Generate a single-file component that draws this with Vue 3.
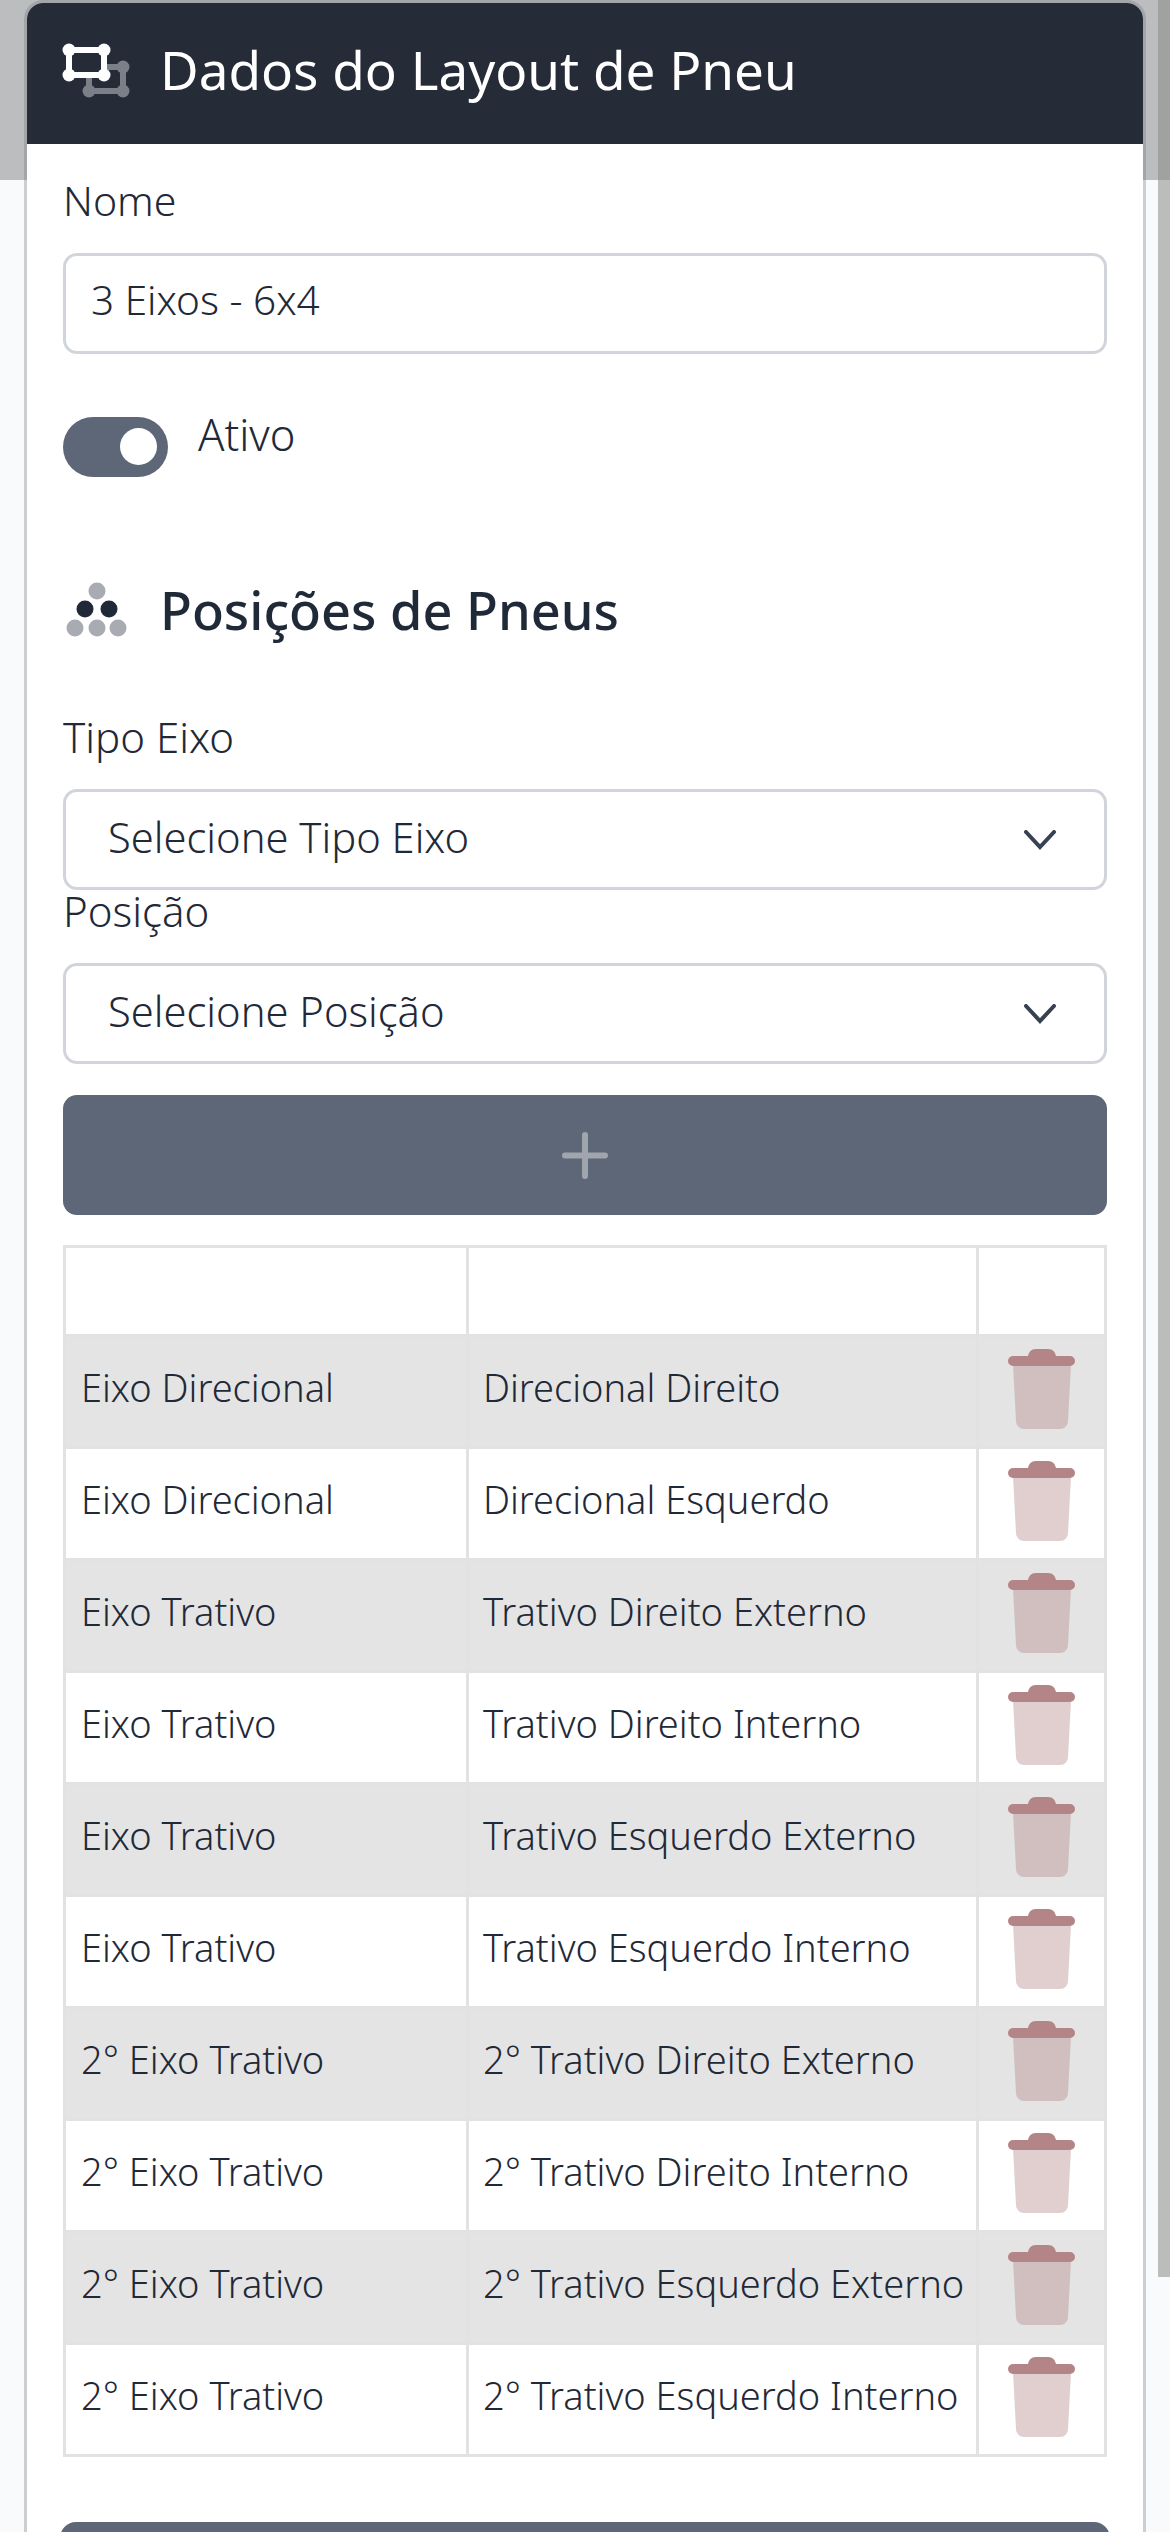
<script setup>
const rows = [
  ['Eixo Direcional', 'Direcional Direito'],
  ['Eixo Direcional', 'Direcional Esquerdo'],
  ['Eixo Trativo', 'Trativo Direito Externo'],
  ['Eixo Trativo', 'Trativo Direito Interno'],
  ['Eixo Trativo', 'Trativo Esquerdo Externo'],
  ['Eixo Trativo', 'Trativo Esquerdo Interno'],
  ['2° Eixo Trativo', '2° Trativo Direito Externo'],
  ['2° Eixo Trativo', '2° Trativo Direito Interno'],
  ['2° Eixo Trativo', '2° Trativo Esquerdo Externo'],
  ['2° Eixo Trativo', '2° Trativo Esquerdo Interno'],
]
</script>

<template>
  <div class="page">
    <div class="backdrop"></div>
    <div class="rail"></div>
    <main class="card">
      <header class="head">
        <svg class="head-icon" viewBox="0 0 70 56" width="70" height="56">
          <path d="M27 32V48H61V24H42" fill="none" stroke="#7b7f87" stroke-width="6" />
          <g fill="#7b7f87">
            <circle cx="27" cy="48" r="6.5" /><circle cx="61" cy="48" r="6.5" /><circle cx="61" cy="24" r="6.5" />
          </g>
          <rect x="7" y="7" width="35" height="25" fill="none" stroke="#fff" stroke-width="6" />
          <g fill="#fff">
            <circle cx="7" cy="7" r="6.5" /><circle cx="42" cy="7" r="6.5" /><circle cx="7" cy="32" r="6.5" /><circle cx="42" cy="32" r="6.5" />
          </g>
        </svg>
        <h1>Dados do Layout de Pneu</h1>
      </header>
      <div class="body">
        <label class="label name">Nome</label>
        <div class="input">3 Eixos - 6x4</div>
        <div class="toggle-row">
          <span class="toggle"><i></i></span>
          <span class="toggle-label">Ativo</span>
        </div>
        <div class="section">
          <svg viewBox="0 0 62 56" width="62" height="56">
            <g fill="#a9abb2">
              <circle cx="31" cy="9" r="8.5" /><circle cx="9" cy="46" r="8.5" /><circle cx="31" cy="46" r="8.5" /><circle cx="52" cy="46" r="8.5" />
            </g>
            <g fill="#1f2937">
              <circle cx="19" cy="27" r="8.5" /><circle cx="43" cy="27" r="8.5" />
            </g>
          </svg>
          <h2>Posições de Pneus</h2>
        </div>
        <label class="label l2">Tipo Eixo</label>
        <div class="select"><span>Selecione Tipo Eixo</span><svg viewBox="0 0 32 20" width="32" height="20"><path d="M2 2l14 15L30 2" fill="none" stroke="#374151" stroke-width="4" stroke-linecap="round" /></svg></div>
        <label class="label l3">Posição</label>
        <div class="select"><span>Selecione Posição</span><svg viewBox="0 0 32 20" width="32" height="20"><path d="M2 2l14 15L30 2" fill="none" stroke="#374151" stroke-width="4" stroke-linecap="round" /></svg></div>
        <button class="add" type="button">
          <svg viewBox="0 0 46 47" width="46" height="47"><path d="M23 3v41M3 23.500h40" stroke="#a0a5ae" stroke-width="6" stroke-linecap="round" /></svg>
        </button>
        <table class="table">
          <thead><tr><th class="c1"></th><th class="c2"></th><th class="c3"></th></tr></thead>
          <tbody>
            <tr v-for="(r, i) in rows" :key="i" :class="{ odd: i % 2 === 0 }">
              <td>{{ r[0] }}</td>
              <td>{{ r[1] }}</td>
              <td class="act">
                <svg viewBox="0 0 67 80" width="67" height="80">
                  <path d="M5 15h58l-3 57a8 8 0 0 1-8 8H16a8 8 0 0 1-8-8z" fill="#b38586" fill-opacity=".4" />
                  <path d="M20 7c1-4 3-7 8-7h12c5 0 7 3 8 7h14a5 5 0 0 1 0 10H5a5 5 0 0 1 0-10z" fill="#b38586" />
                </svg>
              </td>
            </tr>
          </tbody>
        </table>
        <div class="save"></div>
      </div>
    </main>
  </div>
</template>

<style>
html, body { margin: 0; height: 2532px; overflow: hidden; background: #f9fafc; }
</style>

<style scoped>
.page { position: relative; height: 2532px; overflow: hidden; background: #f9fafc; font-family: "Noto Sans", sans-serif; color: #1f2937; }
.backdrop { position: absolute; left: 0; right: 0; top: 0; height: 180px; background: #bbbdbf; }
.rail { position: absolute; right: 0; top: 0; width: 12px; height: 2277px; background: linear-gradient(#a0a2a0 180px, #bbbdbb 180px); }
.card { position: relative; width: 1116px; margin: 3px 0 0 27px; background: #fff; border-radius: 16px 16px 0 0; box-shadow: 0 0 0 3px rgba(120,122,125,.35); height: 2600px; }
.head { height: 141px; background: #252b37; border-radius: 16px 16px 0 0; display: flex; align-items: center; padding: 0 0 6px 35px; box-sizing: border-box; color: #fff; }
.head-icon { margin-right: 28px; flex: none; }
h1 { margin: 0; font-size: 53px; font-weight: 400; line-height: 58px; padding-bottom: 2px; }
.body { padding: 33px 36px 0 36px; }
.label { display: block; font-size: 42px; font-weight: 300; line-height: 48px; padding-bottom: 2px; }
.name { font-size: 41px; line-height: 46px; padding-bottom: 4px; }
.input { margin-top: 26px; height: 101px; box-sizing: border-box; border: 3px solid #d1d5db; border-radius: 14px; padding-left: 25px; font-size: 40.500px; font-weight: 300; line-height: 88px; }
.toggle-row { display: flex; margin-top: 63px; }
.toggle { width: 105px; height: 60px; background: #5e6777; border-radius: 30px; position: relative; display: block; }
.toggle i { position: absolute; right: 11px; top: 11px; width: 37px; height: 37px; background: #fff; border-radius: 50%; }
.toggle-label { margin-left: 30px; font-size: 43.500px; font-weight: 300; line-height: 50px; margin-top: -8px; }
.section { display: flex; align-items: center; margin-top: 103px; height: 60px; }
.section svg { margin: 0 32px 0 3px; flex: none; }
h2 { margin: 0; font-size: 52.300px; font-weight: 500; line-height: 60px; }
.l2 { margin-top: 73px; }
.l3 { margin-top: -3px; }
.select { margin-top: 26px; height: 101px; box-sizing: border-box; border: 3px solid #d1d5db; border-radius: 14px; padding: 0 48px 0 42px; font-size: 41.700px; font-weight: 300; display: flex; align-items: center; justify-content: space-between; }
.select span { padding-bottom: 6px; }
.add { display: flex; width: 100%; height: 120px; margin-top: 31px; align-items: center; justify-content: center; border: 0; padding: 0; background: #5e6777; border-radius: 14px; }
.table { width: 1044px; margin-top: 30px; border-collapse: collapse; table-layout: fixed; font-size: 38px; font-weight: 300; }
th { height: 86px; border: 3px solid #e2e2e2; padding: 0; }
.c1 { width: 400px; }
.c3 { width: 125px; }
td { padding: 0 0 10px 15px; box-sizing: content-box; border: 3px solid #e2e2e2; white-space: nowrap; line-height: 50px; }
tbody td { height: 99px; }
tbody td:nth-child(2) { padding-left: 14px; }
tr.odd td { background: #e4e4e4; }
tbody td.act { padding: 0; height: 109px; vertical-align: top; }
.act svg { display: block; margin: 12px auto 0; }
.save { margin: 65px -3px 0; height: 80px; background: #5e6777; border-radius: 16px 16px 0 0; }
</style>
